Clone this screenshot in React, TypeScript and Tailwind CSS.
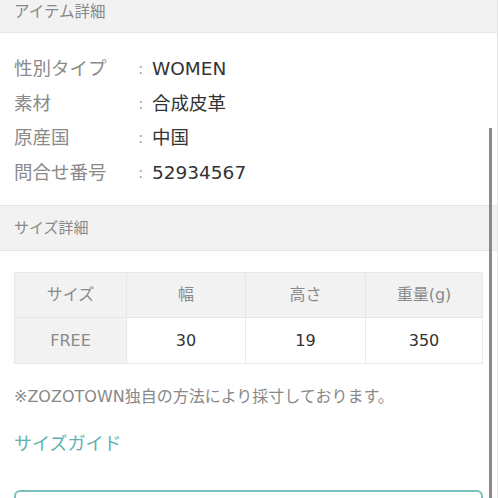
import React from "react";

const jp = { fontFamily: '"DejaVu Sans", "Noto Sans CJK JP", "Noto Sans", sans-serif' };

export default function App() {
  const specs: [string, string][] = [
    ["性別タイプ", "WOMEN"],
    ["素材", "合成皮革"],
    ["原産国", "中国"],
    ["問合せ番号", "52934567"],
  ];
  return (
    <div className="relative w-[498px] h-[498px] overflow-hidden bg-white" style={jp}>
      <div className="h-[33px] bg-[#f2f2f2] border-b border-[#e6e6e6] flex items-end pl-[14px] pb-[10px]">
        <span className="text-[15.5px] leading-[20px] text-[#888]">アイテム詳細</span>
      </div>
      <div className="pt-[19px] pb-[15px]">
        {specs.map(([k, v]) => (
          <div key={k} className="flex items-center h-[34.5px] text-[18.5px]">
            <span className="w-[138px] pl-[14px] text-[#8a8a8a]">{k}</span>
            <span className="w-[14px] text-[#aaa] text-[16px]">:</span>
            <span className="text-[#333] text-[18.5px]">{v}</span>
          </div>
        ))}
      </div>
      <div className="h-[46px] bg-[#f2f2f2] border-y border-[#e6e6e6] flex items-center pl-[14px]">
        <span className="text-[15px] text-[#888]">サイズ詳細</span>
      </div>
      <div className="mx-[14px] mt-[21px] w-[469px] border border-[#e8e8e8] grid grid-cols-[112px_119px_120px_1fr] text-[16px]">
        <div className="h-[45px] bg-[#f2f2f2] flex items-center justify-center text-[#8a8a8a] border-r border-b border-[#e6e6e6]">サイズ</div>
        <div className="h-[45px] bg-[#f2f2f2] flex items-center justify-center text-[#8a8a8a] border-r border-b border-[#e6e6e6]">幅</div>
        <div className="h-[45px] bg-[#f2f2f2] flex items-center justify-center text-[#8a8a8a] border-r border-b border-[#e6e6e6]">高さ</div>
        <div className="h-[45px] bg-[#f2f2f2] flex items-center justify-center text-[#8a8a8a] border-b border-[#e6e6e6]">重量(g)</div>
        <div className="h-[45px] bg-[#f2f2f2] flex items-center justify-center text-[#8a8a8a] border-r border-[#e6e6e6]">FREE</div>
        <div className="h-[45px] bg-white flex items-center justify-center text-[#333] border-r border-[#ececec]">30</div>
        <div className="h-[45px] bg-white flex items-center justify-center text-[#333] border-r border-[#ececec]">19</div>
        <div className="h-[45px] bg-white flex items-center justify-center text-[#333]">350</div>
      </div>
      <p className="mt-[22px] pl-[14px] text-[16px] leading-[22px] text-[#888]">※ZOZOTOWN独自の方法により採寸しております。</p>
      <p className="mt-[23px] pl-[14px] text-[18px] leading-[26px] text-[#5fb0ae]">サイズガイド</p>
      <div className="mx-[14px] mt-[33px] h-[52px] w-[469px] rounded-[6px] border-2 border-[#7cc0bd]" />
      <div className="absolute left-[489px] top-[128px] bottom-0 w-[3px] bg-[#8a8a8a]" />
      <div className="absolute left-[497px] top-0 bottom-0 w-[1px] bg-[#e4e4e4]" />
    </div>
  );
}
